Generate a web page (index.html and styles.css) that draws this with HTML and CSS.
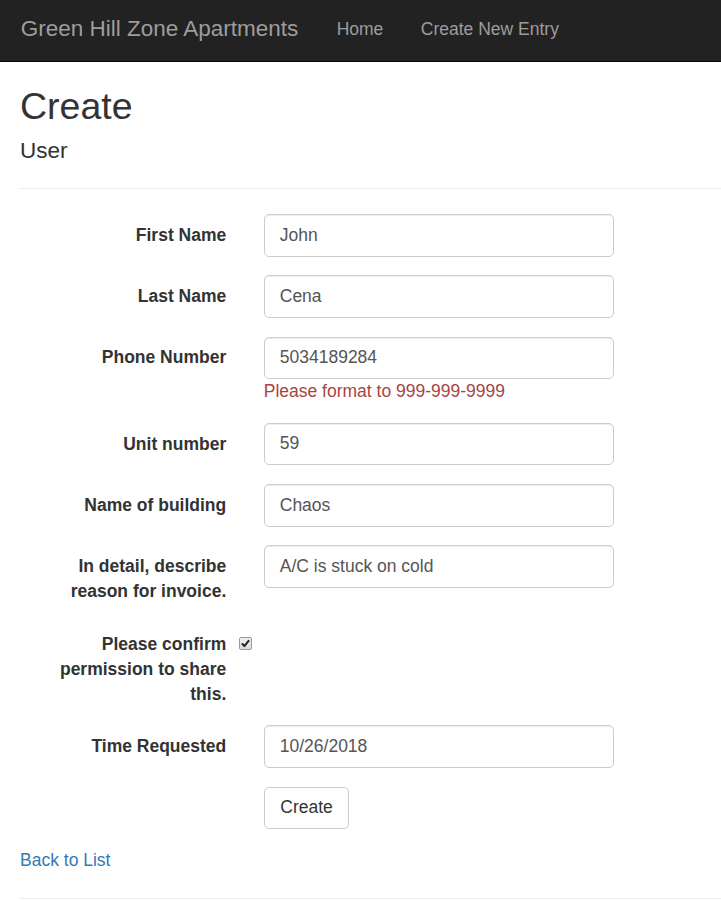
FILE: index.html
```html
<!DOCTYPE html>
<html>
<head>
<meta charset="utf-8">
<title>Create - Green Hill Zone Apartments</title>
<link rel="stylesheet" href="styles.css">
</head>
<body>
<nav class="navbar">
  <a class="brand" href="#">Green Hill Zone Apartments</a>
  <ul class="nav">
    <li><a href="#">Home</a></li>
    <li><a href="#">Create New Entry</a></li>
  </ul>
</nav>
<div class="container">
  <h2 class="title">Create</h2>
  <form class="form">
    <h4 class="subtitle">User</h4>
    <hr class="rule">
    <div class="group">
      <label class="label">First Name</label>
      <div class="field"><div class="input">John</div></div>
    </div>
    <div class="group">
      <label class="label">Last Name</label>
      <div class="field"><div class="input">Cena</div></div>
    </div>
    <div class="group">
      <label class="label">Phone Number</label>
      <div class="field">
        <div class="input">5034189284</div>
        <span class="error">Please format to 999-999-9999</span>
      </div>
    </div>
    <div class="group">
      <label class="label">Unit number</label>
      <div class="field"><div class="input">59</div></div>
    </div>
    <div class="group">
      <label class="label">Name of building</label>
      <div class="field"><div class="input">Chaos</div></div>
    </div>
    <div class="group">
      <label class="label">In detail, describe reason for invoice.</label>
      <div class="field"><div class="input">A/C is stuck on cold</div></div>
    </div>
    <div class="group">
      <label class="label">Please confirm permission to share this.</label>
      <div class="field">
        <div class="check-wrap">
          <span class="check"><svg viewBox="0 0 13 13" width="13" height="13"><path d="M3.4 7 L5.4 9.1 L9.6 3.8" fill="none" stroke="#222" stroke-width="2" stroke-linecap="round" stroke-linejoin="round"/></svg></span>
        </div>
      </div>
    </div>
    <div class="group">
      <label class="label">Time Requested</label>
      <div class="field"><div class="input">10/26/2018</div></div>
    </div>
    <div class="group">
      <div class="offset"></div>
      <div class="field"><button type="button" class="btn">Create</button></div>
    </div>
  </form>
  <div class="back"><a href="#">Back to List</a></div>
  <hr class="rule footer-rule">
</div>
</body>
</html>
```
FILE: styles.css
```css
* { box-sizing: border-box; }
html, body {
  margin: 0;
  padding: 0;
}
body {
  font-family: "Liberation Sans", Arial, Helvetica, sans-serif;
  font-size: 17.5px;
  line-height: 25px;
  color: #333;
  background: #fff;
  overflow: hidden;
}
.navbar {
  height: 62px;
  background: #222;
  border-bottom: 1px solid #080808;
  display: flex;
  align-items: flex-start;
}
.brand {
  display: block;
  padding: 15.5px 19.5px 0 20.75px;
  font-size: 22.5px;
  line-height: 25px;
  color: #9d9d9d;
  text-decoration: none;
}
.nav {
  list-style: none;
  margin: 0;
  padding: 0;
  display: flex;
}
.nav a {
  display: block;
  padding: 16.5px 18.75px 0;
  line-height: 25px;
  color: #9d9d9d;
  text-decoration: none;
}
.container {
  padding-left: 20px;
}
.title {
  margin: 24px 0 12px;
  font-size: 37.5px;
  line-height: 41.25px;
  font-weight: 500;
}
.subtitle {
  margin: 0;
  font-size: 22.5px;
  line-height: 24.75px;
  font-weight: 500;
}
.rule {
  margin: 24px 0 25px;
  border: 0;
  border-top: 1px solid #eee;
  height: 0;
}
.group {
  display: flex;
  margin-left: -18.75px;
  margin-bottom: 18.75px;
}
.label, .offset {
  flex: 0 0 243.75px;
  width: 243.75px;
  padding: 8.75px 18.75px 0;
  text-align: right;
  font-weight: bold;
  margin: 0;
}
.field {
  padding: 0 18.75px;
  flex: 1;
}
.input {
  width: 350px;
  height: 42.5px;
  padding: 7.5px 15px;
  font-size: 17.5px;
  line-height: 25px;
  color: #555;
  background: #fff;
  border: 1px solid #ccc;
  border-radius: 5px;
  box-shadow: inset 0 1px 1px rgba(0,0,0,.075);
}
.error {
  display: block;
  color: #a94442;
}
.check-wrap {
  position: relative;
  padding-top: 8.75px;
  min-height: 33.75px;
}
.check {
  position: absolute;
  left: -25px;
  top: 13.75px;
  width: 13px;
  height: 13px;
  border: 1px solid #9a9a9a;
  border-radius: 2px;
  background: linear-gradient(#efefef, #dcdcdc);
  display: block;
}
.check svg {
  position: absolute;
  left: -1px;
  top: -1px;
}
.btn {
  display: inline-block;
  height: 42.5px;
  padding: 7.5px 15.5px;
  font-family: inherit;
  font-size: 17.5px;
  line-height: 25px;
  color: #333;
  background: #fff;
  border: 1px solid #ccc;
  border-radius: 5px;
  cursor: pointer;
}
.back a {
  color: #337ab7;
  text-decoration: none;
}
.footer-rule {
  margin-top: 25px;
}
```
